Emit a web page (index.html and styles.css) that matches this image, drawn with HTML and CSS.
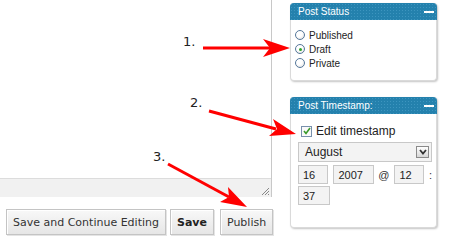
FILE: index.html
```html
<!DOCTYPE html>
<html lang="en">
<head>
    <meta charset="UTF-8">
    <title>Publish</title>
    <link rel="stylesheet" href="styles.css">
</head>
<body>
<div class="page">
    <div class="main">
        <div class="editor">
            <div class="editor-body"></div>
            <div class="editor-status">
                <svg class="grip" width="9" height="9" viewBox="0 0 9 9">
                    <path d="M8 1 L1 8 M8 4 L4 8 M8 7 L7 8" stroke="#888" stroke-width="1"/>
                </svg>
            </div>
        </div>
        <div class="actions">
            <button class="btn">Save and Continue Editing</button>
            <button class="btn btn-bold">Save</button>
            <button class="btn">Publish</button>
        </div>
    </div>

    <div class="sidebar">
        <!-- post status -->
        <div class="box box-status">
            <h3 class="box-head">Post Status<span class="toggle"></span></h3>
            <div class="box-body">
                <label class="opt"><span class="radio"></span>Published</label>
                <label class="opt"><span class="radio on"></span>Draft</label>
                <label class="opt"><span class="radio"></span>Private</label>
            </div>
        </div>
        <!-- timestamp -->
        <div class="box box-time">
            <h3 class="box-head">Post Timestamp:<span class="toggle"></span></h3>
            <div class="box-body">
                <label class="check-row"><span class="check">
                    <svg width="8" height="8" viewBox="0 0 8 8"><path d="M1 4 L3 6.5 L7 1" fill="none" stroke="#3a9a2a" stroke-width="1.6"/></svg>
                </span>Edit timestamp</label>
                <div class="select">
                    <span>August</span>
                    <span class="select-btn">
                        <svg width="8" height="6" viewBox="0 0 8 6"><path d="M1 1 L4 4.5 L7 1" fill="none" stroke="#333" stroke-width="1.8"/></svg>
                    </span>
                </div>
                <div class="fields">
                    <span class="field f-day">16</span>
                    <span class="field f-year">2007</span>
                    <span class="sep">@</span>
                    <span class="field f-hour">12</span>
                    <span class="sep sep-colon">:</span>
                </div>
                <div class="fields">
                    <span class="field f-min">37</span>
                </div>
            </div>
        </div>
    </div>

    <!-- annotations -->
    <svg class="notes" width="450" height="241" viewBox="0 0 450 241">
        <g font-family="DejaVu Sans, sans-serif" font-size="13" fill="#222">
            <text x="183" y="46">1.</text>
            <text x="190" y="107">2.</text>
            <text x="153" y="161">3.</text>
        </g>
        <g stroke="#f00" stroke-width="3" fill="#f00">
            <line x1="203" y1="48" x2="270" y2="48"/>
            <path d="M290 48 L263 39 L270 48 L263 57 Z" stroke="none"/>
            <line x1="209" y1="111" x2="276" y2="129"/>
            <path d="M296 134 L273 119 L277 129 L269 136 Z" stroke="none"/>
            <line x1="168" y1="164" x2="229" y2="197"/>
            <path d="M247 207 L228 187 L229 197 L220 202 Z" stroke="none"/>
        </g>
    </svg>
</div>
</body>
</html>
```

FILE: styles.css
```css
@charset "UTF-8";
/* reset */
body,h3,div,label{margin:0;padding:0}
body{background:#fff;font:11px "Liberation Sans", Arial, sans-serif;color:#222;}
button{font-family:"DejaVu Sans", Verdana, sans-serif;}

.page{
    width:450px;
    height:241px;
    display:flex;
    position:relative;
    overflow:hidden;
}

/* editor column */
.main{
    width:272px;
    flex-shrink:0;
}
.editor{
    border-right:1px solid #c8c8c8;
}
.editor-body{
    height:178px;
}
.editor-status{
    height:17px;
    background:#f1f1f1;
    border-top:1px solid #dcdcdc;
    display:flex;
    justify-content:flex-end;
    align-items:flex-end;
    padding:0 1px 1px 0;
}
.actions{
    display:flex;
    gap:4px;
    margin:12px 0 0 6px;
}
.btn{
    flex-shrink:0;
    white-space:nowrap;
    height:26px;
    padding:0 6px;
    font-size:11px;
    color:#333;
    background:linear-gradient(#f8f8f8,#e6e6e6);
    border:1px solid #c4c4c4;
    box-shadow:inset 1px 1px 0 #fff, 1px 1px 0 #e4e4e4;
}
.btn-bold{
    font-weight:bold;
    color:#222;
    margin-right:2px;
}

/* sidebar */
.sidebar{
    padding:3px 0 0 18px;
    width:147px;
}
.box{
    border:1px solid #dadada;
    border-top:0;
    border-radius:4px;
    box-shadow:1px 1px 2px #c4c4c4;
    background:#fff;
}
.box-time{
    margin-top:16px;
}
.box-head{
    height:17px;
    margin:0 -1px;
    padding:0 0 0 8px;
    display:flex;
    align-items:center;
    justify-content:space-between;
    font-size:10px;
    font-weight:normal;
    color:#fff;
    border-radius:4px 4px 0 0;
    background-color:#2481ad;
    background-image:radial-gradient(#3d95bf 0.6px, transparent 0.9px);
    background-size:3px 3px;
}
.toggle{
    width:10px;
    height:2px;
    background:#fff;
    margin-right:3px;
}

.box-status .box-body{
    padding:8px 0 10px 4px;
}
.opt{
    height:14px;
    display:flex;
    align-items:center;
    font-size:10px;
}
.radio{
    width:8px;
    height:8px;
    border:1px solid #55779a;
    border-radius:50%;
    background:radial-gradient(circle at 40% 35%,#fff 40%,#d8d8d8);
    margin-right:4px;
    display:flex;
    align-items:center;
    justify-content:center;
}
.radio.on::after{
    content:"";
    width:3px;
    height:3px;
    border-radius:50%;
    background:#2fa52a;
}

.box-time .box-body{
    padding:9px 4px 22px 7px;
}
.check-row{
    height:16px;
    display:flex;
    align-items:center;
    font-size:12px;
    color:#222;
}
.check{
    width:9px;
    height:9px;
    border:1px solid #7890ac;
    background:#fafafa;
    margin:0 4px 0 3px;
    display:flex;
    align-items:center;
    justify-content:center;
}
.select{
    height:18px;
    margin-top:3px;
    border:1px solid #c8c8c8;
    background:#f3f3f3;
    display:flex;
    align-items:center;
    justify-content:space-between;
    padding:0 2px 0 6px;
    font-size:12px;
}
.select-btn{
    width:11px;
    height:10px;
    border:1px solid #8a8a8a;
    background:linear-gradient(#fff,#d6d6d6);
    display:flex;
    align-items:center;
    justify-content:center;
}
.fields{
    display:flex;
    align-items:center;
    margin-top:3px;
    font-size:11px;
}
.fields + .fields{
    margin-top:2px;
}
.field{
    height:17px;
    border:1px solid #c8c8c8;
    background:#f3f3f3;
    padding:0 0 0 4px;
    display:flex;
    align-items:center;
}
.f-day,.f-min{width:26px;}
.f-year{width:37px;margin-left:5px;}
.f-hour{width:25px;}
.sep{
    color:#333;
    padding:0 5px 0 4px;
}
.sep-colon{
    padding:0 0 0 5px;
}

/* arrows over the page */
.notes{
    position:absolute;
    left:0;
    top:0;
}
```
